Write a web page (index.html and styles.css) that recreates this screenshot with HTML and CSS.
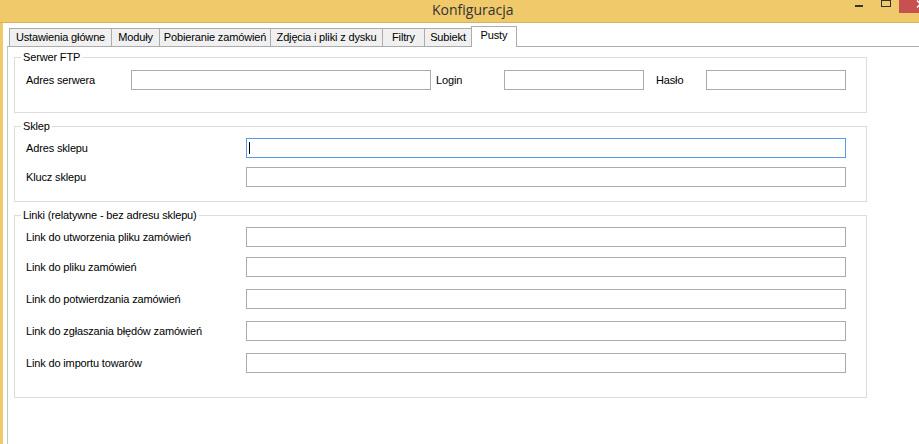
FILE: index.html
```html
<!DOCTYPE html>
<html lang="pl">
<head>
<meta charset="utf-8">
<title>Konfiguracja</title>
<link rel="stylesheet" href="styles.css">
</head>
<body>
<div class="window">
  <div class="titlebar">
    <span class="title">Konfiguracja</span>
    <div class="controls">
      <span class="btn-min"></span>
      <span class="btn-max"></span>
      <span class="btn-close">
        <svg width="20" height="13" viewBox="0 0 20 13"><path d="M18 0.5 L25 7.5 M25 0.5 L18 7.5" stroke="#fff" stroke-width="1.5" fill="none"/></svg>
      </span>
    </div>
  </div>
  <div class="frame">
    <div class="tabcontrol">
      <div class="tabs">
        <div class="tab tab-general">Ustawienia główne</div>
        <div class="tab tab-modules">Moduły</div>
        <div class="tab tab-orders">Pobieranie zamówień</div>
        <div class="tab tab-photos">Zdjęcia i pliki z dysku</div>
        <div class="tab tab-filters">Filtry</div>
        <div class="tab tab-subiekt">Subiekt</div>
        <div class="tab tab-empty tab-active">Pusty</div>
      </div>
      <div class="tabpage">
        <fieldset class="group group-first">
          <legend>Serwer FTP</legend>
          <div class="group-body body-ftp">
            <div class="row-ftp">
              <label class="lbl">Adres serwera</label>
              <input class="field" type="text">
              <label class="lbl lbl-login">Login</label>
              <input class="field" type="text">
              <label class="lbl lbl-pass">Hasło</label>
              <input class="field" type="text">
            </div>
          </div>
        </fieldset>

        <fieldset class="group">
          <legend>Sklep</legend>
          <div class="group-body body-shop">
            <div class="row">
              <label class="lbl">Adres sklepu</label>
              <span class="field-wrap focused"><input class="field field-focus" type="text"></span>
            </div>
            <div class="row">
              <label class="lbl">Klucz sklepu</label>
              <input class="field" type="text">
            </div>
          </div>
        </fieldset>

        <fieldset class="group">
          <legend>Linki (relatywne - bez adresu sklepu)</legend>
          <div class="group-body body-links">
            <div class="row row-compact">
              <label class="lbl">Link do utworzenia pliku zamówień</label>
              <input class="field" type="text">
            </div>
            <div class="row">
              <label class="lbl">Link do pliku zamówień</label>
              <input class="field" type="text">
            </div>
            <div class="row">
              <label class="lbl">Link do potwierdzania zamówień</label>
              <input class="field" type="text">
            </div>
            <div class="row">
              <label class="lbl">Link do zgłaszania błędów zamówień</label>
              <input class="field" type="text">
            </div>
            <div class="row">
              <label class="lbl">Link do importu towarów</label>
              <input class="field" type="text">
            </div>
          </div>
        </fieldset>
      </div>
    </div>
  </div>
</div>
</body>
</html>
```

FILE: styles.css
```css
html, body {
  margin: 0;
  padding: 0;
  background: #ffffff;
  overflow: hidden;
}

body {
  font-family: "Liberation Sans", Arial, sans-serif;
  font-size: 11px;
  letter-spacing: -0.15px;
  color: #000;
}

.window {
  width: 919px;
  height: 444px;
  display: flex;
  flex-direction: column;
}

/* Title bar */
.titlebar {
  height: 22px;
  background: #f0c96b;
  border-bottom: 1px solid #d9b35f;
  display: flex;
  align-items: flex-start;
  flex-shrink: 0;
}

.title {
  margin-left: 432px;
  font-family: "Open Sans", "Noto Sans", sans-serif;
  font-size: 14px;
  line-height: 19px;
  letter-spacing: 0;
  color: #333333;
}

.controls {
  margin-left: auto;
  display: flex;
  align-items: flex-start;
}

.btn-min {
  width: 8px;
  height: 2px;
  margin-top: 5px;
  background: #333333;
}

.btn-max {
  width: 8px;
  height: 5px;
  margin-left: 18px;
  border: 1px solid #333333;
}

.btn-close {
  width: 20px;
  height: 13px;
  margin-left: 8px;
  background: #c75050;
  display: block;
  overflow: hidden;
}

.btn-close svg {
  display: block;
}

/* Frame */
.frame {
  flex: 1;
  display: flex;
  border-left: 3px solid #f0c96b;
  min-height: 0;
}

.tabcontrol {
  flex: 1;
  margin-left: 4px;
  display: flex;
  flex-direction: column;
}

.tabs {
  display: flex;
  align-items: flex-end;
  margin-top: 3px;
  padding-left: 2px;
  height: 20px;
}

.tab {
  box-sizing: border-box;
  height: 18px;
  border: 1px solid #acacac;
  border-bottom: none;
  background: #f0f0f0;
  line-height: 17px;
  text-align: center;
  white-space: nowrap;
  margin-left: -1px;
}

.tab:first-child {
  margin-left: 0;
}

.tab-general { width: 103px; }
.tab-modules { width: 49px; }
.tab-orders { width: 112px; }
.tab-photos { width: 113px; }
.tab-filters { width: 43px; }
.tab-subiekt { width: 48px; }
.tab-empty { width: 46px; }

.tab-active {
  height: 21px;
  margin-bottom: -1px;
  background: #ffffff;
  position: relative;
  z-index: 1;
}

.tabpage {
  flex: 1;
  border-top: 1px solid #acacac;
  border-left: 1px solid #c4c4c4;
  padding: 4px 0 0 6px;
}

/* Group boxes */
.group {
  box-sizing: border-box;
  width: 853px;
  margin: 0;
  padding: 0;
  border: 1px solid #dcdcdc;
  min-inline-size: 0;
}

.group + .group {
  margin-top: 7px;
}

.group legend {
  margin-left: 6px;
  padding: 0 2px;
  line-height: 13px;
  font-size: 11px;
}

.group-body {
  padding: 5px 20px 14px 11px;
  display: flex;
  flex-direction: column;
}

.body-ftp {
  padding-top: 6px;
  padding-bottom: 22px;
}

.body-shop {
  gap: 9px;
}

.body-links {
  gap: 12px;
  padding-bottom: 24px;
}

.row-compact {
  margin-bottom: -2px;
}

.row-ftp {
  display: grid;
  grid-template-columns: 105px 300px 73px 140px 62px 140px;
  align-items: center;
}

.lbl-login {
  padding-left: 5px;
}

.lbl-pass {
  padding-left: 12px;
}

.row {
  display: grid;
  grid-template-columns: 220px 600px;
  align-items: center;
}

.lbl {
  white-space: nowrap;
}

.field {
  box-sizing: border-box;
  display: block;
  width: 100%;
  height: 20px;
  margin: 0;
  padding: 0 2px;
  border: 1px solid #ababab;
  border-radius: 0;
  background: #ffffff;
  font: inherit;
  outline: none;
  caret-color: transparent;
}

.field-wrap {
  position: relative;
  display: block;
}

.field-focus {
  border-color: #569de5;
}

.focused::after {
  content: "";
  position: absolute;
  left: 3px;
  top: 4px;
  width: 1px;
  height: 12px;
  background: #000000;
}
```
